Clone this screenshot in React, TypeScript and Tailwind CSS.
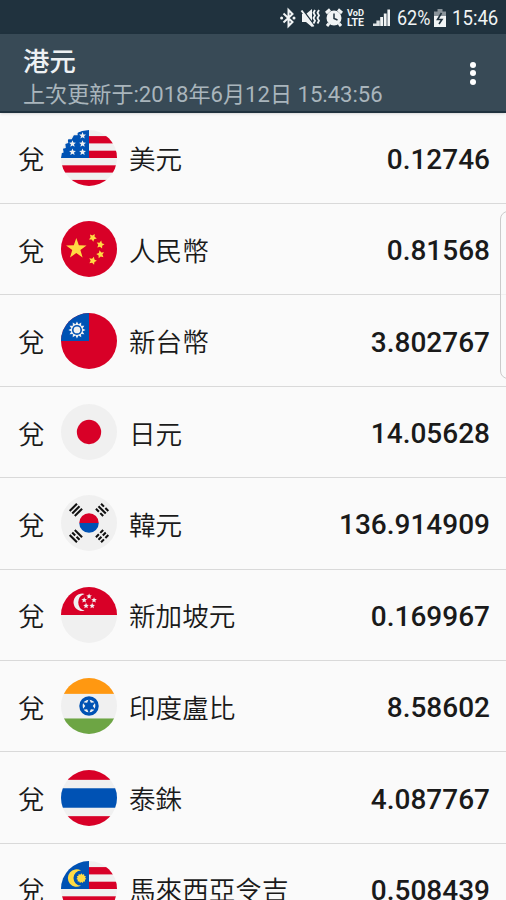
import type { ReactNode } from 'react';

const RED = '#d80027';
const BLUE = '#0052b4';
const LIGHT = '#f0f0f0';
const YELLOW = '#ffda44';

function starPoints(cx: number, cy: number, r: number, spikes = 5, inner = 0.4, tilt = 0) {
  const points: string[] = [];
  for (let i = 0; i < spikes * 2; i++) {
    const radius = i % 2 === 0 ? r : r * inner;
    const angle = (Math.PI * i) / spikes - Math.PI / 2 + tilt;
    points.push(`${(cx + radius * Math.cos(angle)).toFixed(1)},${(cy + radius * Math.sin(angle)).toFixed(1)}`);
  }
  return points.join(' ');
}

function Flag({ id, base = LIGHT, children }: { id: string; base?: string; children: ReactNode }) {
  return (
    <svg viewBox="0 0 512 512" className="size-14 shrink-0">
      <clipPath id={id}>
        <circle cx="256" cy="256" r="256" />
      </clipPath>
      <g clipPath={`url(#${id})`}>
        <rect width="512" height="512" fill={base} />
        {children}
      </g>
    </svg>
  );
}

function Stripes() {
  return (
    <g fill={RED}>
      <rect x="245" y="55.7" width="267" height="66.8" />
      <rect x="245" y="189.2" width="267" height="66.8" />
      <rect y="322.8" width="512" height="66.8" />
      <rect y="456.3" width="512" height="55.7" />
    </g>
  );
}

function UsaFlag() {
  return (
    <Flag id="usa">
      <Stripes />
      <path d="M0 0H150L118 40L60 82L20 150L0 256z" fill="#fafafa" />
      <path
        fill={BLUE}
        d="M256 0C215 0 180 10 152 24V48H118L98 84H62L66 118L40 128L44 165L18 172L24 205L6 212L0 256H256z"
      />
      <g fill={LIGHT}>
        <polygon points={starPoints(197, 52, 33, 5, 0.45)} />
        <polygon points={starPoints(105, 126, 33, 5, 0.45)} />
        <polygon points={starPoints(197, 126, 33, 5, 0.45)} />
        <polygon points={starPoints(105, 202, 33, 5, 0.45)} />
        <polygon points={starPoints(197, 202, 33, 5, 0.45)} />
      </g>
    </Flag>
  );
}

function ChinaFlag() {
  return (
    <Flag id="china" base={RED}>
      <g fill={YELLOW}>
        <polygon points={starPoints(140, 254, 98)} />
        <polygon points={starPoints(290, 152, 38, 5, 0.5, 0.5)} />
        <polygon points={starPoints(360, 216, 38, 5, 0.5, 0.2)} />
        <polygon points={starPoints(360, 305, 38, 5, 0.5, -0.2)} />
        <polygon points={starPoints(290, 363, 38, 5, 0.5, 0.3)} />
      </g>
    </Flag>
  );
}

function TaiwanFlag() {
  return (
    <Flag id="taiwan" base={RED}>
      <rect width="256" height="256" fill={BLUE} />
      <polygon points={starPoints(146, 155, 78, 12, 0.68)} fill={LIGHT} />
      <circle cx="146" cy="155" r="46" fill={BLUE} />
      <circle cx="146" cy="155" r="31" fill={LIGHT} />
    </Flag>
  );
}

function JapanFlag() {
  return (
    <Flag id="japan">
      <circle cx="256" cy="256" r="111.3" fill={RED} />
    </Flag>
  );
}

// bars lists the three lines of a trigram, true for an unbroken one
function Trigram({ x, y, angle, bars }: { x: number; y: number; angle: number; bars: boolean[] }) {
  return (
    <g transform={`translate(${x} ${y}) rotate(${angle})`} stroke="#111" strokeWidth="19">
      {bars.map((solid, i) => (
        <path key={i} d={solid ? `M-47 ${(i - 1) * 33}H47` : `M-47 ${(i - 1) * 33}H-9M9 ${(i - 1) * 33}H47`} />
      ))}
    </g>
  );
}

function KoreaFlag() {
  return (
    <Flag id="korea">
      <path d="M167 256a89 89 0 0 1 178 0z" fill={RED} />
      <path d="M167 256a89 89 0 0 0 178 0z" fill={BLUE} />
      <Trigram x={136} y={136} angle={-45} bars={[true, true, true]} />
      <Trigram x={376} y={136} angle={45} bars={[false, true, false]} />
      <Trigram x={136} y={376} angle={45} bars={[true, false, true]} />
      <Trigram x={376} y={376} angle={-45} bars={[false, false, false]} />
    </Flag>
  );
}

function SingaporeFlag() {
  return (
    <Flag id="singapore">
      <rect width="512" height="256" fill={RED} />
      <g fill={LIGHT}>
        <path d="M216 63a80 80 0 1 0 0 154a80 80 0 0 1 0-154z" />
        <polygon points={starPoints(257, 86, 27, 5, 0.45)} />
        <polygon points={starPoints(302, 120, 27, 5, 0.45)} />
        <polygon points={starPoints(285, 172, 27, 5, 0.45)} />
        <polygon points={starPoints(229, 172, 27, 5, 0.45)} />
        <polygon points={starPoints(212, 120, 27, 5, 0.45)} />
      </g>
    </Flag>
  );
}

function IndiaFlag() {
  return (
    <Flag id="india">
      <rect width="512" height="145" fill="#ff9811" />
      <rect y="370" width="512" height="142" fill="#6da544" />
      <circle cx="256" cy="256" r="89" fill={BLUE} />
      <circle cx="256" cy="256" r="58" fill={LIGHT} />
      <polygon points={starPoints(256, 256, 68.7, 6, 0.5)} fill={BLUE} />
    </Flag>
  );
}

function ThailandFlag() {
  return (
    <Flag id="thailand">
      <rect width="512" height="90" fill={RED} />
      <rect y="167" width="512" height="178" fill={BLUE} />
      <rect y="422" width="512" height="90" fill={RED} />
    </Flag>
  );
}

function MalaysiaFlag() {
  return (
    <Flag id="malaysia">
      <Stripes />
      <rect width="256" height="256" fill={BLUE} />
      <path d="M183 87a80 80 0 1 0 0 138a67 67 0 1 1 0-138z" fill={YELLOW} />
      <polygon points={starPoints(186, 158, 46, 11, 0.75)} fill={YELLOW} />
    </Flag>
  );
}

const rates = [
  { name: '美元', value: '0.12746', flag: <UsaFlag /> },
  { name: '人民幣', value: '0.81568', flag: <ChinaFlag /> },
  { name: '新台幣', value: '3.802767', flag: <TaiwanFlag /> },
  { name: '日元', value: '14.05628', flag: <JapanFlag /> },
  { name: '韓元', value: '136.914909', flag: <KoreaFlag /> },
  { name: '新加坡元', value: '0.169967', flag: <SingaporeFlag /> },
  { name: '印度盧比', value: '8.58602', flag: <IndiaFlag /> },
  { name: '泰銖', value: '4.087767', flag: <ThailandFlag /> },
  { name: '馬來西亞令吉', value: '0.508439', flag: <MalaysiaFlag /> },
];

function StatusIcons() {
  return (
    <svg viewBox="0 0 114 34" className="h-[34px] w-[114px] shrink-0" fill="#f1f4f5">
      {/* bluetooth */}
      <path d="M3.5 13.5l9 8.5-4 4V10l4 4-9 8.5" fill="none" stroke="#f1f4f5" strokeWidth="2" />
      <circle cx="1.6" cy="18" r="1.5" />
      <circle cx="14" cy="18" r="1.5" />
      {/* muted, vibrate */}
      <path d="M22 14h4l6-5V27l-6-5h-4z" />
      <path d="M22.5 9.5l12 16" stroke="#20323e" strokeWidth="1.5" />
      <path d="M21.5 10.5l12 16" stroke="#f1f4f5" strokeWidth="2" />
      <path
        d="M35 10l-1.5 2.7 1.5 2.7-1.5 2.7 1.5 2.7-1.5 2.7M39 10l-1.5 2.7 1.5 2.7-1.5 2.7 1.5 2.7-1.5 2.7"
        fill="none"
        stroke="#f1f4f5"
        strokeWidth="1.8"
      />
      {/* alarm */}
      <circle cx="54" cy="18" r="7.5" />
      <path d="M46 13l4-3.5M62 13l-4-3.5M49 23.5L47 26M59 23.5l2 2.5" stroke="#f1f4f5" strokeWidth="3" />
      <path d="M54 13.5V18.5l3.5 1.5" fill="none" stroke="#20323e" strokeWidth="1.5" />
      {/* signal */}
      <path d="M93 23.5h3.4V26H93zM96.4 20.5h3.4v5.5h-3.4z" opacity=".9" />
      <path d="M100.2 17h2.8v9h-2.8zM103.8 13.5h2.8V26h-2.8zM107.4 9.5h2.6V26h-2.6z" />
      {/* VoLTE */}
      <g fontWeight="700" fontFamily="Roboto, sans-serif">
        <text x="67" y="16" fontSize="9" textLength="17" lengthAdjust="spacingAndGlyphs">
          VoD
        </text>
        <text x="67" y="26" fontSize="10.5" textLength="17" lengthAdjust="spacingAndGlyphs">
          LTE
        </text>
      </g>
    </svg>
  );
}

function StatusBar() {
  return (
    <div className="flex h-[34px] items-center bg-[#20323e] pl-[280px] text-xl leading-none text-[#f1f4f5]">
      <StatusIcons />
      <span className="ml-[3px] w-[37px] origin-left scale-x-[0.9] pt-[2px]">62%</span>
      <svg viewBox="0 0 12 18" className="mt-[1px] h-[18px] w-3 shrink-0" fill="#f1f4f5">
        <path d="M3.5 0h5v2.5H12V7H0V2.5h3.5z" opacity=".5" />
        <path d="M0 7h12v11H0z" />
        <path d="M7.5 4L3.5 10.5h4.5L5 15" fill="none" stroke="#20323e" strokeWidth="1.6" />
      </svg>
      <span className="ml-[6px] origin-left scale-x-[0.93] pt-[2px]">15:46</span>
    </div>
  );
}

export default function App() {
  return (
    <div
      lang="zh-Hant"
      className="relative h-[900px] w-[506px] overflow-hidden bg-[#fafafa] font-[Roboto,'Noto_Sans_CJK_TC',sans-serif]"
    >
      <StatusBar />

      <header className="flex h-[78.6px] items-center justify-between border-b-2 border-[#20323e] bg-[#384a56] pr-[30px] pl-[23px] shadow-sm">
        <div className="flex flex-col pt-[9px]">
          <h1 className="h-[34px] text-[26.4px] leading-[37px] font-medium text-[#eef1f3]">港元</h1>
          <p className="h-8 text-[22.1px] leading-8 text-[#a9b5bc]">上次更新于:2018年6月12日 15:43:56</p>
        </div>
        <div className="flex flex-col gap-[2.5px] pt-[2px]">
          <span className="size-[6px] rounded-full bg-white" />
          <span className="size-[6px] rounded-full bg-white" />
          <span className="size-[6px] rounded-full bg-white" />
        </div>
      </header>

      <ul>
        {rates.map((rate) => (
          <li
            key={rate.name}
            className="flex h-[91.4px] items-center border-b border-[#d9d9d9] pr-4 pl-[18px] text-[26.6px] text-[#1a1a1a]"
          >
            <span className="w-[43px] pt-[5px] font-[350]">兌</span>
            {rate.flag}
            <span className="ml-[12px] pt-[5px] font-[350]">{rate.name}</span>
            <span className="ml-auto pt-[4px] text-[28px] font-medium">{rate.value}</span>
          </li>
        ))}
      </ul>

      {/* edge panel handle, sits over the list */}
      <div className="absolute top-[211px] -right-3 h-[168px] w-[18px] rounded-lg border border-[#cbcbcb] bg-[#fafafa]/70" />
    </div>
  );
}
